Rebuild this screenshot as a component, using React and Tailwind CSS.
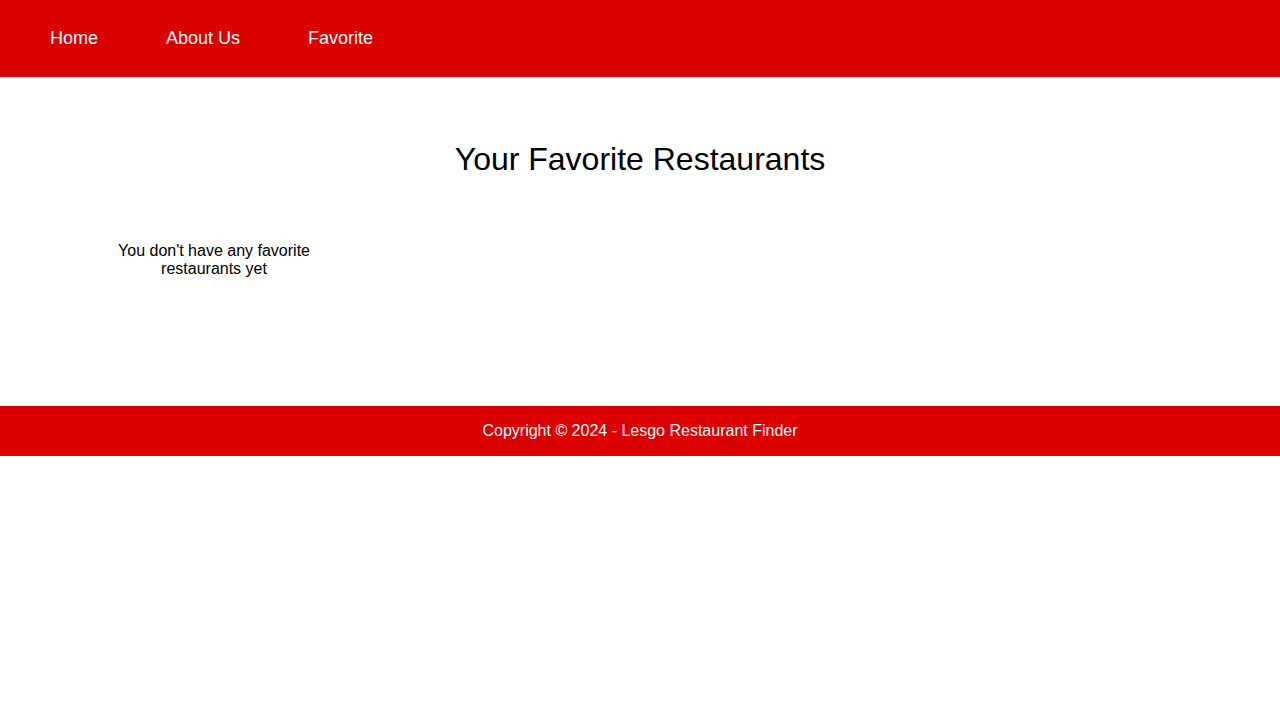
export default function App() {
  return (
    <div className="min-h-[720px] bg-white" style={{ fontFamily: '"Liberation Sans", Arial, sans-serif' }}>
      <nav className="h-[77px] bg-[#db0000] flex items-center pl-[50px]">
        <ul className="flex gap-[68px] text-[18px] text-white leading-[21px]">
          <li><a href="#">Home</a></li>
          <li><a href="#">About Us</a></li>
          <li><a href="#">Favorite</a></li>
        </ul>
      </nav>
      <main className="h-[329px] pt-16">
        <h2 className="text-center text-[32px] leading-[37px] text-black font-normal">Your Favorite Restaurants</h2>
        <div className="mt-[64px] pl-[114px]">
          <p className="w-[200px] text-center text-[16px] leading-[18px] text-black">
            You don't have any favorite restaurants yet
          </p>
        </div>
      </main>
      <footer className="h-[50px] bg-[#db0000] flex items-center justify-center text-white text-[16px]">
        Copyright © 2024 - Lesgo Restaurant Finder
      </footer>
    </div>
  );
}
